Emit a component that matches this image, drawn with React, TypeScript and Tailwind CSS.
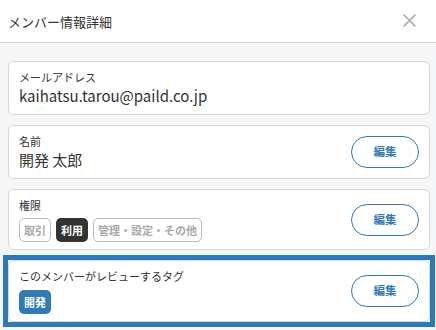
import React from 'react';

const font = { fontFamily: '"Noto Sans CJK JP", "Noto Sans", sans-serif' };

const EditButton: React.FC = () => (
  <button className="w-[68px] h-[32px] shrink-0 rounded-full border border-[#2f7ab9] bg-white text-[#2f7ab9] text-[11.5px] font-bold">
    編集
  </button>
);

const Card: React.FC<{ label: string; children: React.ReactNode; action?: boolean }> = ({
  label,
  children,
  action,
}) => (
  <div className="flex items-center bg-white border border-[#d9d9d9] rounded-[6px] pl-[10px] pr-[10px]">
    <div className="flex-1 min-w-0 py-[7px]">
      <div className="text-[11px] leading-[16px] text-[#333]">{label}</div>
      {children}
    </div>
    {action && <EditButton />}
  </div>
);

export default function App() {
  return (
    <div className="w-[436px] h-[330px] bg-[#f5f6f8] overflow-hidden" style={font}>
      {/* ヘッダー */}
      <div className="h-[43px] bg-white border-b border-[#d6d6d6] flex items-center justify-between pl-[8px] pr-[20px]">
        <div className="text-[13px] text-[#333] leading-none">メンバー情報詳細</div>
        <svg width="13" height="13" viewBox="0 0 13 13" className="-mt-[1px]">
          <path d="M1 1 L12 12 M12 1 L1 12" stroke="#a8a8a8" strokeWidth="1.6" strokeLinecap="round" />
        </svg>
      </div>

      <div className="flex flex-col gap-[10px] pt-[18px] pl-[8px] pr-[6px]">
        <Card label="メールアドレス">
          <div className="text-[15px] leading-[22px] text-[#333]">kaihatsu.tarou@paild.co.jp</div>
        </Card>

        <Card label="名前" action>
          <div className="text-[15px] leading-[22px] text-[#333]">開発 太郎</div>
        </Card>

        <Card label="権限" action>
          <div className="flex gap-[5px] mt-[5px]">
            <span className="h-[24px] px-[4px] flex items-center rounded-[5px] border border-[#bdbdbd] text-[#a9a9a9] text-[11px] font-bold">
              取引
            </span>
            <span className="h-[24px] px-[5px] flex items-center rounded-[5px] bg-[#333] text-white text-[11px] font-bold">
              利用
            </span>
            <span className="h-[24px] px-[4px] flex items-center rounded-[5px] border border-[#bdbdbd] text-[#a9a9a9] text-[11px] font-bold">
              管理・設定・その他
            </span>
          </div>
        </Card>

        {/* 選択中の項目 */}
        <div className="ring-[5px] ring-[#2b79b8]">
          <Card label="このメンバーがレビューするタグ" action>
            <div className="flex mt-[6px]">
              <span className="h-[24px] px-[5px] flex items-center rounded-[5px] bg-[#2f7ab9] text-white text-[11px] font-bold">
                開発
              </span>
            </div>
          </Card>
        </div>
      </div>
    </div>
  );
}
